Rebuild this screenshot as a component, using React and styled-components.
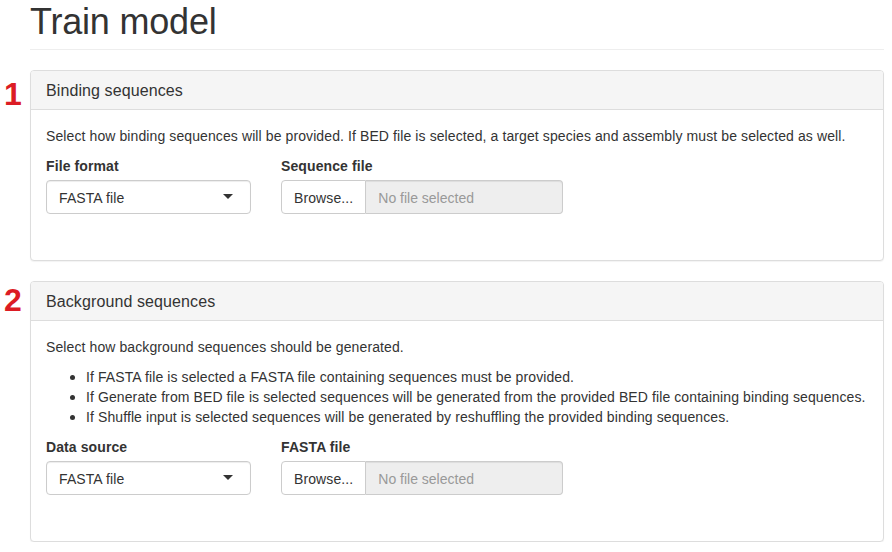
import React from "react";
import styled, { createGlobalStyle } from "styled-components";

const GlobalStyle = createGlobalStyle`
  * { box-sizing: border-box; }
  body {
    margin: 0;
    background: #fff;
    color: #333;
    font-family: "Liberation Sans", Arial, Helvetica, sans-serif;
    font-size: 14px;
    line-height: 20px;
    letter-spacing: 0.1px;
  }
`;

const Select = ({ value }) => (
  <SelectBox>
    <span>{value}</span>
    <Caret />
  </SelectBox>
);

const FileInput = () => (
  <FileGroup>
    <BrowseButton>Browse...</BrowseButton>
    <FileName readOnly placeholder="No file selected" />
  </FileGroup>
);

const App = () => {
  return (
    <Page>
      <GlobalStyle />
      <PageHeader>
        <Title>Train model</Title>
      </PageHeader>

      <StepNumber $top={12}>1</StepNumber>
      <Panel>
        <PanelHeading>Binding sequences</PanelHeading>
        <PanelBody>
          <Paragraph>
            Select how binding sequences will be provided. If BED file is
            selected, a target species and assembly must be selected as well.
          </Paragraph>
          <FieldRow>
            <Field $width={205}>
              <Label>File format</Label>
              <Select value="FASTA file" />
            </Field>
            <Field $width={282}>
              <Label>Sequence file</Label>
              <FileInput />
            </Field>
          </FieldRow>
        </PanelBody>
      </Panel>

      <StepNumber $top={7}>2</StepNumber>
      <Panel>
        <PanelHeading>Background sequences</PanelHeading>
        <PanelBody>
          <Paragraph>Select how background sequences should be generated.</Paragraph>
          <BulletList>
            <li>
              If FASTA file is selected a FASTA file containing sequences must
              be provided.
            </li>
            <li>
              If Generate from BED file is selected sequences will be generated
              from the provided BED file containing binding sequences.
            </li>
            <li>
              If Shuffle input is selected sequences will be generated by
              reshuffling the provided binding sequences.
            </li>
          </BulletList>
          <FieldRow>
            <Field $width={205}>
              <Label>Data source</Label>
              <Select value="FASTA file" />
            </Field>
            <Field $width={282}>
              <Label>FASTA file</Label>
              <FileInput />
            </Field>
          </FieldRow>
        </PanelBody>
      </Panel>
    </Page>
  );
};

export default App;

const Page = styled.div`
  display: grid;
  grid-template-columns: 30px 1fr;
  row-gap: 20px;
  padding-right: 8px;
  width: 892px;
`;

const PageHeader = styled.div`
  grid-column: 2;
  padding-top: 2px;
  padding-bottom: 7px;
  border-bottom: 1px solid #eee;
`;

const Title = styled.h1`
  margin: 0;
  font-size: 36px;
  font-weight: 500;
  line-height: 40px;
  letter-spacing: -0.2px;
  color: #333;
`;

const StepNumber = styled.div`
  grid-column: 1;
  padding-top: ${(p) => p.$top}px;
  padding-left: 4px;
  color: #dc1c24;
  font-size: 32px;
  font-weight: bold;
  line-height: 24px;
`;

const Panel = styled.section`
  grid-column: 2;
  border: 1px solid #ddd;
  border-radius: 4px;
  background: #fff;
  box-shadow: 0 1px 1px rgba(0, 0, 0, 0.05);
  overflow: hidden;
`;

const PanelHeading = styled.div`
  padding: 11px 15px 9px;
  background: #f5f5f5;
  border-bottom: 1px solid #ddd;
  font-size: 16px;
  line-height: 18px;
  color: #333;
`;

const PanelBody = styled.div`
  padding: 15px;
`;

const Paragraph = styled.p`
  margin: 0 0 10px;
  padding-top: 1px;
  height: 20px;
`;

const BulletList = styled.ul`
  margin: 0 0 10px;
  padding-left: 40px;
  list-style: disc;
  li {
    padding-top: 1px;
    height: 20px;
  }
  li::marker {
    font-size: 16px;
  }
`;

const FieldRow = styled.div`
  display: flex;
  gap: 30px;
  padding-bottom: 31px;
`;

const Field = styled.div`
  display: flex;
  flex-direction: column;
  width: ${(p) => p.$width}px;
`;

const Label = styled.label`
  display: inline-block;
  margin-bottom: 5px;
  padding-top: 1px;
  height: 20px;
  font-weight: bold;
`;

const SelectBox = styled.div`
  position: relative;
  height: 34px;
  padding: 7px 12px 5px;
  border: 1px solid #ccc;
  border-radius: 4px;
  background: #fff;
  color: #333;
  box-shadow: inset 0 1px 1px rgba(0, 0, 0, 0.075);
`;

const Caret = styled.span`
  position: absolute;
  right: 17px;
  top: 50%;
  margin-top: -3px;
  width: 0;
  height: 0;
  border-style: solid;
  border-width: 5px 5px 0 5px;
  border-color: #333 transparent transparent transparent;
`;

const FileGroup = styled.div`
  display: flex;
  height: 34px;
`;

const BrowseButton = styled.span`
  display: flex;
  align-items: center;
  padding: 7px 12px 5px;
  border: 1px solid #ccc;
  border-radius: 4px 0 0 4px;
  background: #fff;
  color: #333;
  white-space: nowrap;
`;

const FileName = styled.input`
  flex: 1;
  min-width: 0;
  height: 34px;
  padding: 7px 12px 5px;
  border: 1px solid #ccc;
  border-left: none;
  border-radius: 0 4px 4px 0;
  background: #eee;
  font: inherit;
  color: #555;
  box-shadow: inset 0 1px 1px rgba(0, 0, 0, 0.075);
  outline: none;
  &::placeholder {
    color: #999;
  }
`;
